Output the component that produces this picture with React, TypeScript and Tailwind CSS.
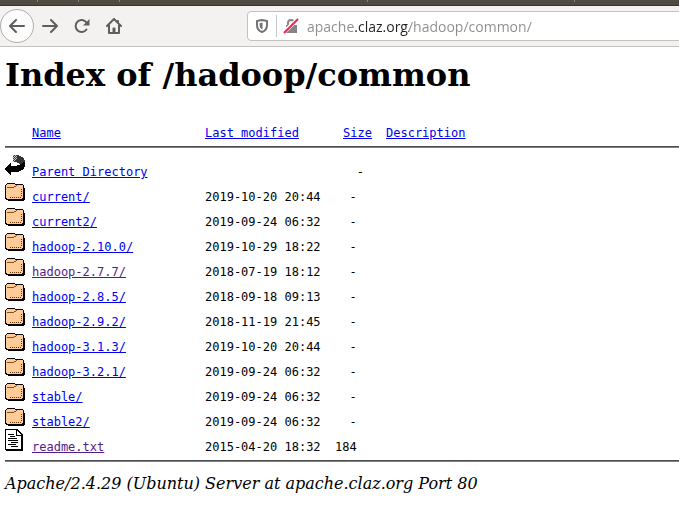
import React from "react";

type Kind = "back" | "folder" | "text";
type Entry = { name: string; modified: string; size: string; kind: Kind; visited?: boolean };

const entries: Entry[] = [
  { name: "Parent Directory", modified: "", size: "   -", kind: "back" },
  { name: "current/", modified: "2019-10-20 20:44", size: "  -", kind: "folder" },
  { name: "current2/", modified: "2019-09-24 06:32", size: "  -", kind: "folder" },
  { name: "hadoop-2.10.0/", modified: "2019-10-29 18:22", size: "  -", kind: "folder" },
  { name: "hadoop-2.7.7/", modified: "2018-07-19 18:12", size: "  -", kind: "folder", visited: true },
  { name: "hadoop-2.8.5/", modified: "2018-09-18 09:13", size: "  -", kind: "folder" },
  { name: "hadoop-2.9.2/", modified: "2018-11-19 21:45", size: "  -", kind: "folder" },
  { name: "hadoop-3.1.3/", modified: "2019-10-20 20:44", size: "  -", kind: "folder" },
  { name: "hadoop-3.2.1/", modified: "2019-09-24 06:32", size: "  -", kind: "folder" },
  { name: "stable/", modified: "2019-09-24 06:32", size: "  -", kind: "folder" },
  { name: "stable2/", modified: "2019-09-24 06:32", size: "  -", kind: "folder" },
  { name: "readme.txt", modified: "2015-04-20 18:32", size: "184", kind: "text", visited: true },
];

function FolderIcon() {
  return (
    <svg width="20" height="22" viewBox="0 0 20 22" shapeRendering="crispEdges" aria-hidden="true">
      <path fill="#000" d="M2 4h8v1h8v1h1v3h1v12h-1v1H3v-1H1v-1H0V6h1V5h1z" />
      <path fill="#ffcc99" d="M2 5h8v1h8v13h-1v1H2v-1H1V6h1z" />
      <path fill="#663300" d="M2 8h7v1H2zM9 7h2v1H9zM11 6h1v1h-1z" opacity="0.8" />
      <path fill="none" stroke="#663300" strokeDasharray="1 1" d="M5 18.5h12M16.5 10v8" />
    </svg>
  );
}

function BackIcon() {
  return (
    <svg width="20" height="22" viewBox="0 0 20 22" shapeRendering="crispEdges" aria-hidden="true">
      <path fill="#333" d="M8 1h6v1h2v1h2v1h1v2h1v3h-2v1h-4V9h-2V8H8z" />
      <path fill="none" stroke="#ccc" strokeDasharray="1 1" d="M8 1.5h3M9 2.5h3M8 3.5h4M9 4.5h3M8 5.5h4M9 6.5h2M8 7.5h2" />
      <path fill="#000" d="M20 8v5h-1v2h-1v1h-2v1h-2v1H6v3H5v-1H4v-1H3v-1H2v-1H1v-1H0v-2h1v-1h1v-1h1v-1h1v-1h1v-1h1v3h6v-1h3v-1h2v-1h1v-1h1V8z" />
    </svg>
  );
}

function TextIcon() {
  return (
    <svg width="20" height="22" viewBox="0 0 20 22" shapeRendering="crispEdges" aria-hidden="true">
      <path fill="#000" d="M0 0h13v1h1v1h1v1h1v1h1v1h1v17H1v-1H0z" />
      <path fill="#fff" d="M1 1h10v6h5v13H1zM12 2h1v1h1v1h1v1h1v1h-4z" />
      <path fill="#000" d="M3 5h6v1H3zM5 7h5v1H5zM3 9h9v1H3zM3 11h10v1H3zM6 13h7v1H6zM3 15h8v1H3zM6 17h7v1H6z" />
    </svg>
  );
}

function ArrowIcon({ forward = false }: { forward?: boolean }) {
  return (
    <svg width="16" height="16" viewBox="0 0 16 16" fill="none" stroke="#5f5e5b" strokeWidth="2" strokeLinecap="round" strokeLinejoin="round" aria-hidden="true">
      <path d={forward ? "M1 8h14M9 2l6 6-6 6" : "M15 8H1M7 2L1 8l6 6"} />
    </svg>
  );
}

function ReloadIcon() {
  return (
    <svg width="16" height="16" viewBox="0 0 16 16" fill="none" aria-hidden="true">
      <path stroke="#5f5e5b" strokeWidth="2" strokeLinecap="round" d="M12.500 11.500A6 6 0 1 1 12.500 4.500" />
      <path fill="#5f5e5b" d="M15.500 1v6.500H9z" />
    </svg>
  );
}

function HomeIcon() {
  return (
    <svg width="16" height="16" viewBox="0 0 16 16" fill="none" stroke="#5f5e5b" strokeWidth="2" strokeLinejoin="round" strokeLinecap="round" aria-hidden="true">
      <path d="M1 8l7-7 7 7M3 7v8h10V7M12 3v2" />
      <path d="M7.500 10.500h1v3h-1z" />
    </svg>
  );
}

function ShieldIcon() {
  return (
    <svg width="14" height="16" viewBox="0 0 14 16" fill="none" aria-hidden="true">
      <path stroke="#737373" strokeWidth="2" strokeLinejoin="round" d="M7 2l5 1v4C12 10.500 10 13 7 14 4 13 2 10.500 2 7V3z" />
      <path fill="#737373" d="M7.500 4.500v7C5.300 10.600 4.600 9 4.600 7V5.200z" />
    </svg>
  );
}

function InsecureIcon() {
  return (
    <svg width="16" height="16" viewBox="0 0 16 16" fill="none" aria-hidden="true">
      <path stroke="#858585" strokeWidth="2" d="M5 8V5a3 3 0 0 1 6 0v3" />
      <path fill="#858585" d="M3 7h11v8H3z" />
      <path stroke="#fff" strokeWidth="4" d="M0 15L15 1" />
      <path stroke="#ff1a4b" strokeWidth="2" d="M1 15L15 1" />
    </svg>
  );
}

const icons = { back: BackIcon, folder: FolderIcon, text: TextIcon };

const link = "underline text-[#0000ee]";
const visitedLink = "underline text-[#551a8b]";

function Rule() {
  return <hr className="h-[2px] border-0 border-t border-[#4d4d4d] bg-[#808080]" />;
}

export default function App() {
  return (
    <div className="min-h-screen bg-white text-black">
      <div className="flex h-[6px] border-b border-[#3b3035] bg-[#504b42] pl-[37px]" aria-hidden="true">
        <div className="h-[2px] w-[41px] border-l border-[#85817a]" />
        <div className="h-[2px] w-[41px] border-l border-[#85817a]" />
        <div className="h-[2px] w-[248px] border-l border-[#85817a]" />
        <div className="h-[2px] w-[207px] border-l border-[#85817a]" />
        <div className="h-[2px] flex-1 border-l border-[#85817a]" />
      </div>
      <nav className="flex h-[41px] items-center border-b border-[#c4c2c0] bg-[#f3f2f1] text-[#5f5e5b]">
        <button type="button" aria-label="Back" className="flex size-[34px] items-center justify-center rounded-full border border-[#b0aeac] bg-[#fcfcfc]">
          <ArrowIcon />
        </button>
        <button type="button" aria-label="Forward" className="flex size-8 items-center justify-center">
          <ArrowIcon forward />
        </button>
        <button type="button" aria-label="Reload" className="flex size-8 items-center justify-center">
          <ReloadIcon />
        </button>
        <button type="button" aria-label="Home" className="flex size-8 items-center justify-center">
          <HomeIcon />
        </button>
        <div className="-mr-2 ml-[117px] flex h-[30px] flex-1 items-center rounded-[4px] border border-[#c4c2c0] bg-white pl-[7px]">
          <ShieldIcon />
          <span className="ml-[7px] h-[22px] w-px bg-[#c8c8c8]" />
          <span className="ml-[6px]"><InsecureIcon /></span>
          <input
            type="text"
            aria-label="Address"
            defaultValue="apache.claz.org/hadoop/common/"
            className="ml-2 h-[22px] min-w-0 flex-1 bg-[linear-gradient(to_right,#8c8c8c_48px,#222_48px,#222_102px,#8c8c8c_102px)] bg-clip-text font-['Open_Sans',sans-serif] text-[14px] text-transparent outline-none"
          />
        </div>
      </nav>
      <main className="pt-[9px] pl-[5px]">
        <h1 className="font-['DejaVu_Serif',serif] text-[32px] leading-[38px] font-bold">Index of /hadoop/common</h1>
        <table className="mt-8 w-full table-fixed border-collapse font-['DejaVu_Sans_Mono',monospace] text-[12px] leading-[14px]">
          <colgroup>
            <col className="w-[27px]" />
            <col className="w-[173px]" />
            <col className="w-[130px]" />
            <col className="w-[51px]" />
            <col />
          </colgroup>
          <thead>
            <tr className="text-left">
              <td className="p-0" />
              <th className="p-0 font-normal"><a href="#name" className={link}>Name</a></th>
              <th className="p-0 font-normal"><a href="#modified" className={link}>Last modified</a></th>
              <th className="py-0 pr-0 pl-2 font-normal"><a href="#size" className={link}>Size</a></th>
              <th className="p-0 font-normal"><a href="#description" className={link}>Description</a></th>
            </tr>
          </thead>
          <tbody>
            <tr>
              <td colSpan={5} className="px-0 py-[6px]"><Rule /></td>
            </tr>
            {entries.map((e) => {
              const Icon = icons[e.kind];
              return (
                <tr key={e.name} className="h-[25px]">
                  <td className="p-0 pb-[3px] align-top [&>svg]:block"><Icon /></td>
                  <td className="p-0 align-bottom"><a href={"#" + e.name} className={e.visited ? visitedLink : link}>{e.name}</a></td>
                  <td className="p-0 align-bottom">{e.modified}</td>
                  <td className="p-0 align-bottom whitespace-pre">{e.size}</td>
                  <td className="p-0" />
                </tr>
              );
            })}
          </tbody>
        </table>
        <div className="mt-[6px]"><Rule /></div>
        <address className="mt-3 font-['DejaVu_Serif',serif] text-[16px] leading-[19px] italic">
          Apache/2.4.29 (Ubuntu) Server at apache.claz.org Port 80
        </address>
      </main>
    </div>
  );
}
